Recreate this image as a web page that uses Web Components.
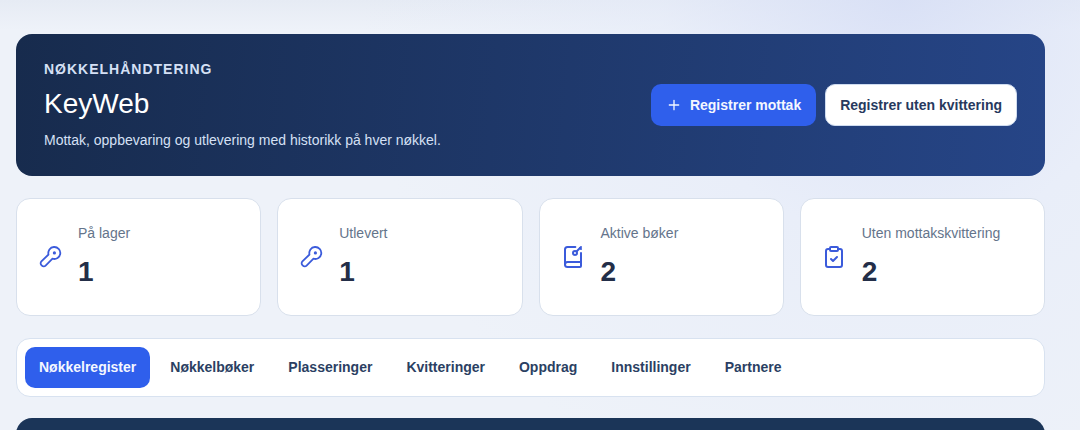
<!DOCTYPE html>
<html lang="no"><head><meta charset="utf-8"><title>KeyWeb</title>
<style>
html,body{margin:0;height:430px;overflow:hidden}
body{font-family:"Liberation Sans",Arial,sans-serif;background:
 radial-gradient(circle at 900px 0px,rgba(214,222,246,.8),rgba(228,234,249,.5) 240px,rgba(238,242,250,0) 540px),
 linear-gradient(180deg,#e6ebf4 0,#eef2f9 30px,#eef2f9 100%);}
</style></head><body>
<template id="t-app"><style>
:host{display:block;width:1029px;padding:34px 0 0 16px;box-sizing:content-box}
.stack{display:flex;flex-direction:column;gap:22px}
</style><div class="stack"><slot></slot></div></template>

<template id="t-hero"><style>
:host{display:flex;align-items:center;justify-content:space-between;height:142px;box-sizing:border-box;padding:0 28px;border-radius:16px;background:linear-gradient(95deg,#172b4d 0%,#264587 100%);color:#fff}
.eye{font-size:14px;font-weight:700;letter-spacing:1px;color:#d5e0f5;line-height:16px;margin:1px 0 10px}
h1{margin:0 0 9px;font-size:28px;font-weight:400;line-height:34px;color:#fff}
p{margin:0;font-size:14px;line-height:20px;color:#d5e0f5}
.acts{display:flex;gap:9px}
</style><div><div class="eye"><slot name="eyebrow"></slot></div><h1><slot name="title"></slot></h1><p><slot name="sub"></slot></p></div><div class="acts"><slot name="actions"></slot></div></template>

<template id="t-btn"><style>
:host{display:inline-flex;align-items:center;gap:8px;height:42px;box-sizing:border-box;padding:0 14px;border-radius:10px;font-size:14px;font-weight:700;white-space:nowrap;border:1px solid transparent}
:host([variant=primary]){background:#2f5fec;color:#f4f7ff}
:host([variant=light]){background:#fff;color:#27395e;border-color:#cfdcf0}
</style><slot name="icon"></slot><slot></slot></template>

<template id="t-stat"><style>
:host{display:flex;align-items:center;gap:16px;height:118px;box-sizing:border-box;padding:0 21px;background:#fff;border:1px solid #d8e0ec;border-radius:14px}
.ic{width:24px;height:24px;flex:none;color:#3b5bdb}
.l{font-size:14px;line-height:20px;color:#64748b;margin-bottom:12px}
.v{font-size:28px;font-weight:700;line-height:34px;color:#232e48}
.t{position:relative;top:-1.5px}
</style><div class="ic"><slot name="icon"></slot></div><div class="t"><div class="l"><slot name="label"></slot></div><div class="v"><slot name="value"></slot></div></div></template>

<template id="t-tabs"><style>
:host{display:flex;align-items:center;gap:6px;height:59px;box-sizing:border-box;padding:0 8px 1px;background:#fff;border:1px solid #d8e2f0;border-radius:14px}
</style><slot></slot></template>

<template id="t-tab"><style>
:host{display:flex;align-items:center;height:41px;padding:0 14px 1px;box-sizing:border-box;border-radius:10px;font-size:14px;font-weight:700;color:#2b3f63;white-space:nowrap}
:host([active]){background:#2f5fec;color:#f4f7ff}
</style><slot></slot></template>

<template id="t-panel"><style>
:host{display:block;height:80px;margin-top:-1px;background:#1b3558;border-radius:16px 16px 0 0}
</style></template>

<script>
for(const [n,t] of [['key-app','t-app'],['key-hero','t-hero'],['key-btn','t-btn'],['key-stat','t-stat'],['key-tabs','t-tabs'],['key-tab','t-tab'],['key-panel','t-panel']]){
 customElements.define(n,class extends HTMLElement{constructor(){super();this.attachShadow({mode:'open'}).appendChild(document.getElementById(t).content.cloneNode(true));}});
}
customElements.define('key-stats',class extends HTMLElement{constructor(){super();this.attachShadow({mode:'open'}).innerHTML='<style>:host{display:grid;grid-template-columns:repeat(4,1fr);gap:16px}</style><slot></slot>';}});
</script>
<key-app>
<key-hero>
 <span slot="eyebrow">NØKKELHÅNDTERING</span><span slot="title">KeyWeb</span>
 <span slot="sub">Mottak, oppbevaring og utlevering med historikk på hver nøkkel.</span>
 <key-btn slot="actions" variant="primary"><svg slot="icon" width="16" height="16" viewBox="0 0 24 24" fill="none" stroke="currentColor" stroke-width="2" stroke-linecap="round" style="display:block"><path d="M5 12h14M12 5v14"/></svg>Registrer mottak</key-btn>
 <key-btn slot="actions" variant="light">Registrer uten kvittering</key-btn>
</key-hero>
<key-stats>
 <key-stat><svg slot="icon" width="24" height="24" viewBox="0 0 24 24" fill="none" stroke="currentColor" stroke-width="1.8" stroke-linecap="round" stroke-linejoin="round" style="display:block"><path d="M10.5 9.5a6 6 0 1 1 4 4.2L7.6 20.6a2.6 2.6 0 0 1-3.7 0l-.5-.5a2.6 2.6 0 0 1 0-3.7Z"/><circle cx="16.4" cy="7.9" r=".7" fill="currentColor"/></svg><span slot="label">På lager</span><span slot="value">1</span></key-stat>
 <key-stat><svg slot="icon" width="24" height="24" viewBox="0 0 24 24" fill="none" stroke="currentColor" stroke-width="1.8" stroke-linecap="round" stroke-linejoin="round" style="display:block"><path d="M10.5 9.5a6 6 0 1 1 4 4.2L7.6 20.6a2.6 2.6 0 0 1-3.7 0l-.5-.5a2.6 2.6 0 0 1 0-3.7Z"/><circle cx="16.4" cy="7.9" r=".7" fill="currentColor"/></svg><span slot="label">Utlevert</span><span slot="value">1</span></key-stat>
 <key-stat><svg slot="icon" width="24" height="24" viewBox="0 0 24 24" fill="none" stroke="currentColor" stroke-width="2" stroke-linecap="round" stroke-linejoin="round" style="display:block"><path d="m19 3 1 1"/><path d="m20 2-4.5 4.5"/><path d="M20 7.898V21a1 1 0 0 1-1 1H6.5a1 1 0 0 1 0-5H20"/><path d="M4 19.5v-15A2.5 2.5 0 0 1 6.5 2h7.844"/><circle cx="14" cy="8" r="2"/></svg><span slot="label">Aktive bøker</span><span slot="value">2</span></key-stat>
 <key-stat><svg slot="icon" width="24" height="24" viewBox="0 0 24 24" fill="none" stroke="currentColor" stroke-width="2" stroke-linecap="round" stroke-linejoin="round" style="display:block"><rect width="8" height="4" x="8" y="2" rx="1" ry="1"/><path d="M16 4h2a2 2 0 0 1 2 2v14a2 2 0 0 1-2 2H6a2 2 0 0 1-2-2V6a2 2 0 0 1 2-2h2"/><path d="m9 14 2 2 4-4"/></svg><span slot="label">Uten mottakskvittering</span><span slot="value">2</span></key-stat>
</key-stats>
<key-tabs><key-tab active>Nøkkelregister</key-tab><key-tab>Nøkkelbøker</key-tab><key-tab>Plasseringer</key-tab><key-tab>Kvitteringer</key-tab><key-tab>Oppdrag</key-tab><key-tab>Innstillinger</key-tab><key-tab>Partnere</key-tab></key-tabs>
<key-panel></key-panel>
</key-app>
</body></html>
